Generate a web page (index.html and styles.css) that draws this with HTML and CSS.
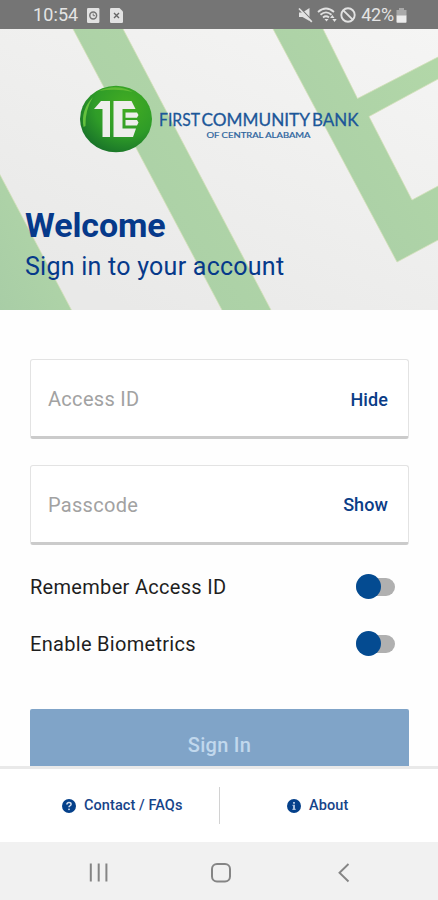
FILE: index.html
```html
<!DOCTYPE html>
<html lang="en">
<head>
<meta charset="utf-8">
<title>First Community Bank – Sign in</title>
<link rel="stylesheet" href="styles.css">
</head>
<body>
<div class="screen">
  <header class="status">
    <div class="status-left">
      <span class="clock">10:54</span>
      <svg class="st-file" width="13" height="15" viewBox="0 0 13 15"><rect width="12.4" height="15" rx="1.2" fill="#e2e2e2"/><circle cx="6.2" cy="7.5" r="3.4" fill="none" stroke="#757575" stroke-width="1.5"/><path d="M6.2 5.5v2.2H8" fill="none" stroke="#757575"/></svg>
      <svg class="st-file2" width="14" height="15" viewBox="0 0 14 15"><path d="M1.2 0H9.500L13 3.500V13.800Q13 15 11.800 15H1.200Q0 15 0 13.800V1.200Q0 0 1.200 0Z" fill="#e2e2e2"/><path d="M4 5l5 5M9 5l-5 5" stroke="#666" stroke-width="1.400"/></svg>
    </div>
    <div class="status-right">
      <svg width="15" height="16" viewBox="0 0 15 16"><path d="M1 5.500h3.500l7-4.500v13l-7-4H1Z" fill="#e2e2e2"/><path d="M2.500 1.500L15 14.500" stroke="#757575" stroke-width="1.400"/><path d="M1 1.500L13.800 14.800" stroke="#e2e2e2" stroke-width="1.700"/></svg>
      <svg class="wifi" width="20" height="16" viewBox="0 0 20 16"><g fill="none" stroke="#e2e2e2" stroke-width="1.800"><path d="M1 5Q9 -2 17 5"/><path d="M3.500 7.800Q9 3 14.500 7.800"/><path d="M6 10.500Q9 8 12 10.500"/></g><path d="M7.500 12h4L9.500 14.500ZM15.300 8l2.200 3h-4.400ZM17.500 15l-2.200-3h4.400Z" fill="#e2e2e2"/></svg>
      <svg class="block" width="16" height="16" viewBox="0 0 16 16"><circle cx="8" cy="8" r="6.700" fill="none" stroke="#e2e2e2" stroke-width="1.900"/><path d="M3.300 3.300l9.400 9.400" stroke="#e2e2e2" stroke-width="1.900"/></svg>
      <span class="percent">42%</span>
      <svg class="battery" width="11" height="15" viewBox="0 0 11 15"><path d="M3 0h5v2h2.500v6H.5V2H3Z" fill="#a9a9a9"/><path d="M.5 7.500h10V14q0 .8-.8.8H1.300q-.8 0-.8-.8Z" fill="#ececec"/></svg>
    </div>
  </header>

  <section class="hero">
    <svg class="hero-art" width="438" height="281" viewBox="0 29 438 281" preserveAspectRatio="none">
      <defs>
        <linearGradient id="paper" x1="1" y1="0" x2=".3" y2="1"><stop offset="0" stop-color="#f5f5f4"/><stop offset="1" stop-color="#e9e9e8"/></linearGradient>
        <linearGradient id="leaf" x1="0" y1="1" x2="1" y2="0"><stop offset="0" stop-color="#a8cda6"/><stop offset="1" stop-color="#b3d8a8"/></linearGradient>
      </defs>
      <rect y="29" width="438" height="281" fill="url(#paper)"/>
      <g fill="url(#leaf)" stroke="#d3dfb9" stroke-width=".8">
        <path d="M-2 171L72 311H-2Z"/>
        <path d="M72.500 28L222.500 311H271.500L122.500 28Z"/>
        <path d="M272.500 28L397 262L440 239V185L412 200L369 116.500L440 78V56L357.500 98.500L322.500 28Z"/>
      </g>
    </svg>
    <svg class="logo" width="282" height="70" viewBox="79 84 282 70" role="img" aria-label="First Community Bank of Central Alabama">
      <defs>
        <radialGradient id="ball" cx=".65" cy=".3" r=".75"><stop offset="0" stop-color="#43ad22"/><stop offset=".6" stop-color="#2f9c28"/><stop offset="1" stop-color="#197429"/></radialGradient>
      </defs>
      <ellipse cx="116" cy="119" rx="36" ry="33.200" fill="url(#ball)"/>
      <path d="M83.500 127Q80.500 110 93 97Q85 110 85.500 126Z" fill="#75cf43" opacity=".8"/>
      <path d="M99 91Q116 83 133 92Q116 88 99 91Z" fill="#74c63d" opacity=".7"/>
      <path d="M94 109L101 101H110V137H102.500V109ZM113.500 101H131.500L135.500 109H122.500V128.500H136L133 137H113.500Z" fill="#eeeeec"/>
      <path d="M125.500 112.500H137L138.500 115L137 117.800H125.500ZM125.500 120H137L138.500 122.500L137 125.500H125.500Z" fill="#eeeeec"/>
      <g class="logo-name">
        <text x="159" y="125.700" textLength="41" lengthAdjust="spacingAndGlyphs">FIRST</text>
        <text x="201.500" y="125.700" textLength="108.500" lengthAdjust="spacingAndGlyphs">COMMUNITY</text>
        <text x="312" y="125.700" textLength="46.500" lengthAdjust="spacingAndGlyphs">BANK</text>
      </g>
      <text class="logo-sub" x="206.500" y="137.800" textLength="104" lengthAdjust="spacingAndGlyphs">OF CENTRAL ALABAMA</text>
    </svg>
    <div class="greeting">
      <h1>Welcome</h1>
      <p>Sign in to your account</p>
    </div>
  </section>

  <main class="form">
    <div class="field"><span class="placeholder">Access ID</span><span class="action">Hide</span></div>
    <div class="field"><span class="placeholder pass">Passcode</span><span class="action">Show</span></div>
    <div class="toggle-row"><span class="remember">Remember Access ID</span><span class="switch"><i></i></span></div>
    <div class="toggle-row"><span class="bio">Enable Biometrics</span><span class="switch"><i></i></span></div>
    <div class="signin">Sign In</div>
  </main>

  <footer class="links">
    <div class="link contact">
      <svg width="14" height="14" viewBox="0 0 14 14"><circle cx="7" cy="7" r="7" fill="#04408a"/><path d="M4.900 5.500Q5 3.600 7 3.600T9.100 5.300Q9.100 6.400 7.900 6.900Q7 7.300 7 8.300" fill="none" stroke="#d5e0ee" stroke-width="1.500"/><circle cx="7" cy="10.300" r=".9" fill="#d5e0ee"/></svg>
      <span>Contact / FAQs</span>
    </div>
    <div class="link about">
      <svg width="14" height="14" viewBox="0 0 14 14"><circle cx="7" cy="7" r="7" fill="#04408a"/><path d="M6 3h2v1.700H6zM5.500 5.700H8V9.700h.7v1.200H5.400V9.700H6V6.900h-.5Z" fill="#a9bfdb"/></svg>
      <span>About</span>
    </div>
  </footer>

  <nav class="navbar">
    <svg width="438" height="58" viewBox="0 842 438 58" fill="none" stroke="#858585">
      <path d="M90.800 863.500V881.500M98.700 863.500V881.500M106.400 863.500V881.500" stroke-width="2"/>
      <rect x="212" y="864" width="18" height="17.500" rx="5" stroke-width="2"/>
      <path d="M348.500 864L339.500 872.700L348.500 881.500" stroke-width="1.900"/>
    </svg>
  </nav>
</div>
</body>
</html>
```

FILE: styles.css
```css
* { box-sizing: border-box; }
body { margin: 0; background: #fff; font-family: Roboto, "Liberation Sans", sans-serif; }
.screen { width: 438px; height: 900px; display: flex; flex-direction: column; overflow: hidden; background: #fefefe; }

.status { height: 29px; flex: none; display: flex; justify-content: space-between; padding: 0 31px 0 33px; background: #757575; color: #e4e4e4; font-size: 18px; line-height: 30px; }
.status-left, .status-right { display: flex; align-items: center; height: 30px; }
.clock { width: 46px; letter-spacing: .1px; }
.st-file { margin-left: 8px; }
.st-file2 { margin-left: 10px; }
.wifi { margin-left: 4px; }
.block { margin-left: 3px; }
.percent { margin-left: 5px; letter-spacing: -.2px; }
.battery { margin-left: 2px; }

.hero { height: 281px; flex: none; display: grid; grid-template: 281px / 438px; overflow: hidden; }
.hero > * { grid-area: 1 / 1; }
.hero-art { display: block; }
.logo { margin: 55px 0 0 79px; overflow: visible; }
.logo-name { font: 400 17.500px Lato, sans-serif; fill: #1c5799; stroke: #1c5799; stroke-width: .3px; }
.logo-sub { font: 400 7.500px Lato, sans-serif; fill: #2b639d; stroke: #2b639d; stroke-width: .2px; }
.greeting { padding: 176px 0 0 25px; color: #06398a; }
.greeting h1 { margin: 0; font-size: 34px; line-height: 40px; font-weight: 700; letter-spacing: -.1px; }
.greeting p { margin: 6px 0 0; font-size: 25px; line-height: 32px; letter-spacing: .25px; }

.form { flex: none; height: 456px; padding: 49px 29px 0 30px; overflow: hidden; }
.field { height: 80px; margin-bottom: 25.500px; padding: 2px 20px 0 17px; display: flex; align-items: center; justify-content: space-between; background: #fff; border: 1px solid #e3e3e3; border-bottom: 3px solid #cbcbcb; border-radius: 3px; }
.placeholder { color: #a2a2a2; font-size: 20px; letter-spacing: .3px; }
.action { color: #0a3d87; font-size: 18px; font-weight: 500; letter-spacing: .1px; }
.toggle-row { height: 57px; padding-right: 14px; display: flex; align-items: center; justify-content: space-between; color: #1e1e1e; font-size: 20px; letter-spacing: .3px; }
.field + .toggle-row { margin-top: -12px; }
.switch { width: 39px; height: 18px; display: flex; align-items: center; background: #b0b0b0; border-radius: 9px; }
.switch i { flex: none; width: 25px; height: 25px; border-radius: 50%; background: #044b91; }
.signin { height: 70px; margin-top: 37px; border-radius: 2px; background: #80a4c8; color: #c1d8ed; text-align: center; font-size: 20px; font-weight: 500; line-height: 72px; letter-spacing: .3px; }

.links { height: 76px; flex: none; display: flex; align-items: center; border-top: 3px solid #e9e9e9; background: #fff; color: #174489; font-size: 14.500px; font-weight: 500; }
.link { height: 37px; display: flex; align-items: center; gap: 8px; }
.contact { width: 220px; padding-left: 62px; border-right: 1px solid #d2d2d2; }
.about { padding-left: 67px; }
.link span { letter-spacing: .08px; }
.navbar { height: 58px; flex: none; background: #f1f1f1; }
.navbar svg { display: block; }
```
